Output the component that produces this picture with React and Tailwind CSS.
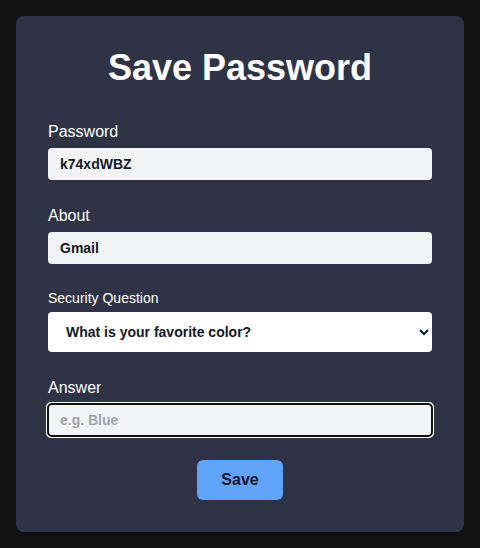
import React from "react";

export default function App() {
  return (
    <div
      className="min-h-screen bg-[#111111] p-4"
      style={{ fontFamily: '"Liberation Sans", Arial, sans-serif' }}
    >
      <div className="rounded-lg bg-[#2f3346] p-8">
        <h1 className="mb-8 text-center text-4xl font-bold text-white">Save Password</h1>
        <div className="mb-6">
          <label className="mb-1 block text-base text-white">Password</label>
          <input
            className="h-8 w-full rounded bg-[#f3f4f6] px-3 text-sm font-bold text-[#111827] outline-none"
            defaultValue="k74xdWBZ"
            readOnly
          />
        </div>
        <div className="mb-6">
          <label className="mb-1 block text-base text-white">About</label>
          <input
            className="h-8 w-full rounded bg-[#f3f4f6] px-3 text-sm font-bold text-[#111827] outline-none"
            defaultValue="Gmail"
            readOnly
          />
        </div>
        <div className="mb-6">
          <label className="mb-1 block text-sm text-white">Security Question</label>
          <select className="h-10 w-full rounded bg-white pl-[14px] pr-3 text-sm font-bold text-[#111827] outline-none">
            <option>What is your favorite color?</option>
          </select>
        </div>
        <div className="mb-6">
          <label className="mb-1 block text-base text-white">Answer</label>
          <input
            autoFocus
            className="h-8 w-full rounded bg-[#f3f4f6] px-3 text-sm font-bold text-[#111827] placeholder:text-[#9ca3af]"
            placeholder="e.g. Blue"
          />
        </div>
        <div className="flex justify-center">
          <button className="h-10 rounded-md bg-[#60a5fa] px-6 text-base font-bold text-[#111827]">
            Save
          </button>
        </div>
      </div>
    </div>
  );
}
